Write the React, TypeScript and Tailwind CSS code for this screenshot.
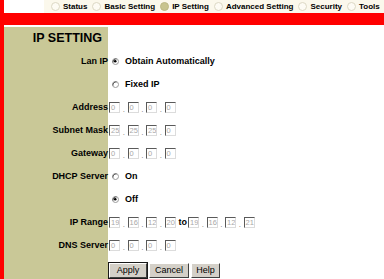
import React from "react";

const navItems = [
  { label: "Status", active: false },
  { label: "Basic Setting", active: false },
  { label: "IP Setting", active: true },
  { label: "Advanced Setting", active: false },
  { label: "Security", active: false },
  { label: "Tools", active: false },
];

const Radio = ({ checked }: { checked?: boolean }) => (
  <svg width="7" height="7" viewBox="0 0 7 7" className="shrink-0">
    <circle cx="3.5" cy="3.5" r="3" fill="#fff" stroke="#9a9a9a" strokeWidth="1" />
    <path d="M1 4.5 A3 3 0 0 1 4.5 1" fill="none" stroke="#555" strokeWidth="1" />
    {checked && <circle cx="3.2" cy="3.2" r="1.3" fill="#000" />}
  </svg>
);

const Box = ({ value }: { value: string }) => (
  <div className="w-[11px] h-[11px] bg-white border-t border-l border-t-[#5a5a5a] border-l-[#5a5a5a] border-b border-r border-b-[#dcdcdc] border-r-[#dcdcdc] text-[7.5px] leading-[9px] pl-[1px] text-[#a8a8a8] overflow-hidden">
    {value}
  </div>
);

const IpBoxes = ({ values }: { values: string[] }) => (
  <div className="flex items-center">
    {values.map((v, i) => (
      <React.Fragment key={i}>
        {i > 0 && (
          <span className="w-[7.5px] text-center text-[8px] leading-none text-[#777] pt-[4px]">.</span>
        )}
        <Box value={v} />
      </React.Fragment>
    ))}
  </div>
);

const Row = ({ label, children, className = "" }: { label?: string; children?: React.ReactNode; className?: string }) => (
  <div className="flex h-[23px]">
    <div className="w-[104px] shrink-0 bg-[#c9c897] flex items-center justify-end text-[9px] font-bold text-black">
      {label}
    </div>
    <div className={"flex-1 flex items-center pl-[1px] " + className}>{children}</div>
  </div>
);

const RadioOption = ({ checked, text }: { checked?: boolean; text: string }) => (
  <div className="flex items-center gap-[6px] pl-[3px]">
    <Radio checked={checked} />
    <span className="text-[9px] font-bold text-black">{text}</span>
  </div>
);

const Button = ({ text, w, primary }: { text: string; w: string; primary?: boolean }) => (
  <button
    className={
      "h-[15px] bg-[#d4d0c8] text-[9px] leading-none text-black border border-t-white border-l-white border-b-[#404040] border-r-[#404040] " +
      w +
      (primary ? " outline outline-1 outline-[#1a1a1a]" : "")
    }
  >
    {text}
  </button>
);

export default function App() {
  return (
    <div className="w-[384px] h-[279px] flex bg-white overflow-hidden font-['Liberation_Sans',Arial,sans-serif]">
      <div className="w-[4px] shrink-0 bg-[#ff0000]" />
      <div className="flex-1 flex flex-col">
        <nav className="h-[13px] flex shrink-0">
          <div className="w-[40px] bg-white" />
          <div className="flex-1 bg-[#fbf8ec] flex items-center pl-[7px] gap-[5px]">
            {navItems.map((item) => (
              <div key={item.label} className="flex items-center gap-[3px]">
                <span
                  className={
                    "w-[9px] h-[9px] rounded-full border " +
                    (item.active ? "bg-[#c8c48e] border-[#bdb985]" : "bg-[#fdfbf4] border-[#dcd8c4]")
                  }
                />
                <span className="text-[8px] font-bold text-black whitespace-nowrap leading-none">{item.label}</span>
              </div>
            ))}
          </div>
        </nav>
        <div className="h-[12px] shrink-0 bg-[#ff0000]" />
        <div className="h-[2px] shrink-0" />
        <div className="flex flex-col">
          <div className="flex h-[23px]">
            <div className="w-[104px] shrink-0 bg-[#c9c897] flex items-center justify-end pr-[6px] text-[12.5px] font-bold text-black">
              IP SETTING
            </div>
            <div className="flex-1" />
          </div>
          <Row label="Lan IP">
            <RadioOption checked text="Obtain Automatically" />
          </Row>
          <Row>
            <RadioOption text="Fixed IP" />
          </Row>
          <Row label="Address">
            <IpBoxes values={["0", "0", "0", "0"]} />
          </Row>
          <Row label="Subnet Mask">
            <IpBoxes values={["25", "25", "25", "0"]} />
          </Row>
          <Row label="Gateway">
            <IpBoxes values={["0", "0", "0", "0"]} />
          </Row>
          <Row label="DHCP Server">
            <RadioOption text="On" />
          </Row>
          <Row>
            <RadioOption checked text="Off" />
          </Row>
          <Row label="IP Range">
            <IpBoxes values={["19", "16", "12", "20"]} />
            <span className="text-[9px] font-bold text-black ml-[3px] mr-[1px]">to</span>
            <IpBoxes values={["19", "16", "12", "21"]} />
          </Row>
          <Row label="DNS Server">
            <IpBoxes values={["0", "0", "0", "0"]} />
          </Row>
          <Row className="gap-[2px] items-end pb-[2px]">
            <Button text="Apply" w="w-[38px]" primary />
            <Button text="Cancel" w="w-[40px]" />
            <Button text="Help" w="w-[29px]" />
          </Row>
        </div>
      </div>
    </div>
  );
}
